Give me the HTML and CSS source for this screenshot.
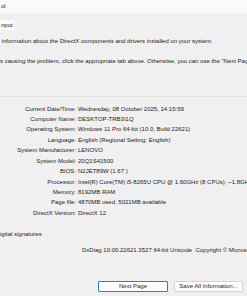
FILE: index.html
```html
<!DOCTYPE html>
<html>
<head>
<meta charset="utf-8">
<link rel="stylesheet" href="styles.css">
</head>
<body>
<div class="window">
  <div class="titlebar">ol</div>
  <div class="tabs"><span class="tab">nput</span></div>
  <div class="intro">
    <p class="intro-line first">&nbsp;information about the DirectX components and drivers installed on your system.</p>
    <p class="intro-line">s causing the problem, click the appropriate tab above. Otherwise, you can use the "Next Page" button below to visit each page in sequence.</p>
  </div>
  <div class="sep"></div>
  <div class="info">
    <div class="label">Current Date/Time:</div><div class="value">Wednesday, 08 October 2025, 14:15:59</div>
    <div class="label">Computer Name:</div><div class="value">DESKTOP-TRB3I1Q</div>
    <div class="label">Operating System:</div><div class="value">Windows 11 Pro 64-bit (10.0, Build 22621)</div>
    <div class="label">Language:</div><div class="value">English (Regional Setting: English)</div>
    <div class="label">System Manufacturer:</div><div class="value">LENOVO</div>
    <div class="label">System Model:</div><div class="value">20Q1S41500</div>
    <div class="label">BIOS:</div><div class="value">N2JET89W (1.67 )</div>
    <div class="label">Processor:</div><div class="value">Intel(R) Core(TM) i5-8265U CPU @ 1.60GHz (8 CPUs), ~1.8GHz</div>
    <div class="label">Memory:</div><div class="value">8192MB RAM</div>
    <div class="label">Page file:</div><div class="value">4870MB used, 5021MB available</div>
    <div class="label">DirectX Version:</div><div class="value">DirectX 12</div>
  </div>
  <div class="sig">igital signatures</div>
  <div class="version">DxDiag 10.00.22621.3527 64-bit Unicode&nbsp; Copyright © Microsoft. All rights reserved.</div>
  <div class="buttons">
    <button class="btn btn-default">Next Page</button>
    <button class="btn">Save All Information...</button>
  </div>
</div>
</body>
</html>
```
FILE: styles.css
```css
html, body {
  margin: 0;
  padding: 0;
}
body {
  width: 247px;
  height: 296px;
  overflow: hidden;
  background: #f0f0f0;
  font-family: "Liberation Sans", Arial, sans-serif;
  font-size: 6px;
  color: #1b1b1b;
}
.window {
  display: flex;
  flex-direction: column;
  white-space: nowrap;
}
.titlebar {
  height: 13px;
  line-height: 13px;
  background: #fafafa;
  padding-left: 1px;
}
.tabs {
  margin-top: 7px;
  height: 10px;
  display: flex;
}
.tab {
  background: #fbfbfb;
  line-height: 10px;
  padding: 0 2px 0 1px;
}
.intro {
  margin-top: 6px;
}
.intro-line {
  margin: 0;
  line-height: 10px;
}
.intro-line + .intro-line {
  margin-top: 10px;
}
.sep {
  margin-top: 30px;
  height: 1px;
  background: #e2e2e2;
}
.info {
  margin-top: 6.5px;
  display: grid;
  grid-template-columns: 76px auto;
  column-gap: 2px;
  line-height: 10.43px;
}
.label {
  text-align: right;
}
.sig {
  margin-top: 10.8px;
  line-height: 10px;
}
.version {
  margin-top: 6px;
  line-height: 10px;
  padding-left: 82px;
}
.buttons {
  margin-top: 26px;
  display: flex;
  justify-content: flex-end;
  gap: 6px;
  padding-right: 4px;
}
.btn {
  font-family: inherit;
  font-size: 6px;
  color: #1b1b1b;
  height: 11px;
  width: 69px;
  padding: 0;
  margin: 0;
  line-height: 9px;
  background: #fdfdfd;
  border: 1px solid #d3d3d3;
  border-radius: 1px;
}
.btn-default {
  width: 70px;
  border-color: #2b7fd0;
}
```
